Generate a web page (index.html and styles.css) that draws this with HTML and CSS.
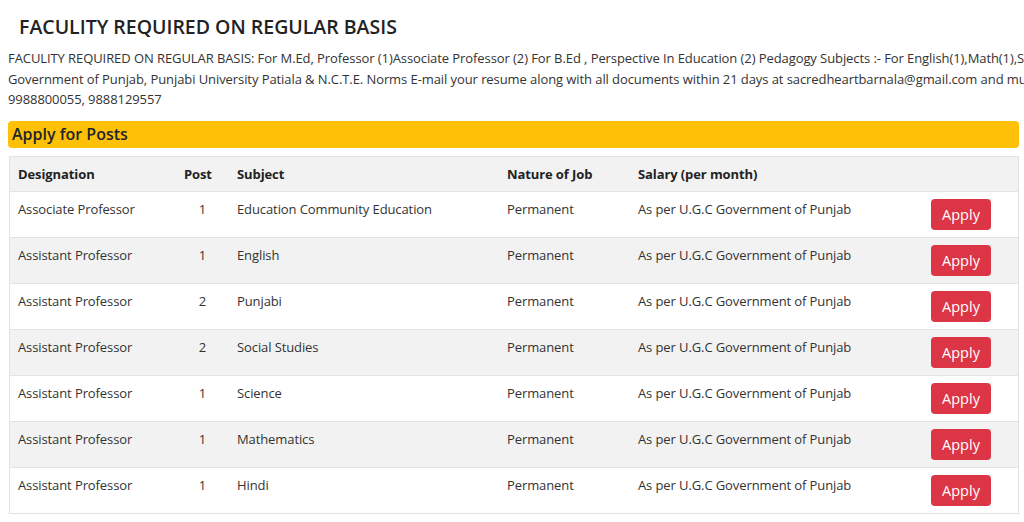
FILE: index.html
```html
<!DOCTYPE html>
<html lang="en">
<head>
<meta charset="utf-8">
<title>Faculty Required</title>
<link rel="stylesheet" href="styles.css">
</head>
<body>
<main class="page">
  <h1 class="title">FACULITY REQUIRED ON REGULAR BASIS</h1>
  <p class="desc"><span class="line">FACULITY REQUIRED ON REGULAR BASIS: For M.Ed, Professor (1)Associate Professor (2) For B.Ed , Perspective In Education (2) Pedagogy Subjects :- For English(1),Math(1),Science(1),Social Studies(2),Punjabi(2),Hindi(1). Qualification &amp; Pay Scale as per U.G.C,</span><span class="line">Government of Punjab, Punjabi University Patiala &amp; N.C.T.E. Norms E-mail your resume along with all documents within 21 days at sacredheartbarnala@gmail.com and must contact on</span><span class="line">9988800055, 9888129557</span></p>
  <h2 class="bar">Apply for Posts</h2>
  <table class="posts">
    <thead>
      <tr><th class="c-des">Designation</th><th class="c-post">Post</th><th class="c-sub">Subject</th><th class="c-nat">Nature of Job</th><th class="c-sal">Salary (per month)</th><th class="c-act"></th></tr>
    </thead>
    <tbody>
      <tr><td>Associate Professor</td><td class="num">1</td><td>Education Community Education</td><td>Permanent</td><td>As per U.G.C Government of Punjab</td><td><button class="apply">Apply</button></td></tr>
      <tr><td>Assistant Professor</td><td class="num">1</td><td>English</td><td>Permanent</td><td>As per U.G.C Government of Punjab</td><td><button class="apply">Apply</button></td></tr>
      <tr><td>Assistant Professor</td><td class="num">2</td><td>Punjabi</td><td>Permanent</td><td>As per U.G.C Government of Punjab</td><td><button class="apply">Apply</button></td></tr>
      <tr><td>Assistant Professor</td><td class="num">2</td><td>Social Studies</td><td>Permanent</td><td>As per U.G.C Government of Punjab</td><td><button class="apply">Apply</button></td></tr>
      <tr><td>Assistant Professor</td><td class="num">1</td><td>Science</td><td>Permanent</td><td>As per U.G.C Government of Punjab</td><td><button class="apply">Apply</button></td></tr>
      <tr><td>Assistant Professor</td><td class="num">1</td><td>Mathematics</td><td>Permanent</td><td>As per U.G.C Government of Punjab</td><td><button class="apply">Apply</button></td></tr>
      <tr><td>Assistant Professor</td><td class="num">1</td><td>Hindi</td><td>Permanent</td><td>As per U.G.C Government of Punjab</td><td><button class="apply">Apply</button></td></tr>
    </tbody>
  </table>
</main>
</body>
</html>
```

FILE: styles.css
```css
html, body {
  margin: 0;
  padding: 0;
  overflow: hidden;
  background: #fff;
}
body {
  font-family: "Open Sans", "Noto Sans", sans-serif;
  font-size: 13px;
  color: #333;
}
.page {
  padding: 0 5px 0 8px;
  width: 1011px;
}
.title {
  margin: 0;
  padding: 14px 0 0 11px;
  font-size: 19.5px;
  font-weight: 600;
  line-height: 26px;
  color: #222;
}
.desc {
  margin: 8px 0 0 0;
  line-height: 20.5px;
  letter-spacing: -0.08px;
  color: #333;
  width: 1400px;
}
.desc .line {
  display: block;
  white-space: nowrap;
}
.bar {
  margin: 11px 0 0 0;
  background: #ffc107;
  border-radius: 4px;
  padding: 0 4px;
  height: 27px;
  line-height: 27px;
  font-size: 16px;
  font-weight: 600;
  color: #212529;
}
.posts {
  margin-top: 8px;
  margin-left: 1px;
  width: calc(100% - 1px);
  border-collapse: collapse;
  border: 1px solid #e3e3e3;
  color: #333;
  letter-spacing: -0.1px;
}
.posts th, .posts td {
  padding: 7px 8px;
  line-height: 20px;
  text-align: left;
  vertical-align: top;
  border-top: 1px solid #e3e3e3;
}
.posts th {
  font-weight: 700;
  color: #222;
}
.posts thead tr { background: #f2f2f2; }
.posts tbody tr:nth-child(even) { background: #f2f2f2; }
.c-des { width: 150px; }
.c-post { width: 37px; }
.c-sub { width: 254px; }
.c-nat { width: 115px; }
.c-sal { width: 277px; }
.posts td.num { text-align: center; }
.apply {
  display: block;
  height: 31px;
  width: 60px;
  padding: 0;
  border: 0;
  border-radius: 4px;
  background: #dc3545;
  color: #fff;
  font-family: inherit;
  font-size: 14.5px;
  letter-spacing: 0;
  line-height: 31px;
  cursor: pointer;
}
```
